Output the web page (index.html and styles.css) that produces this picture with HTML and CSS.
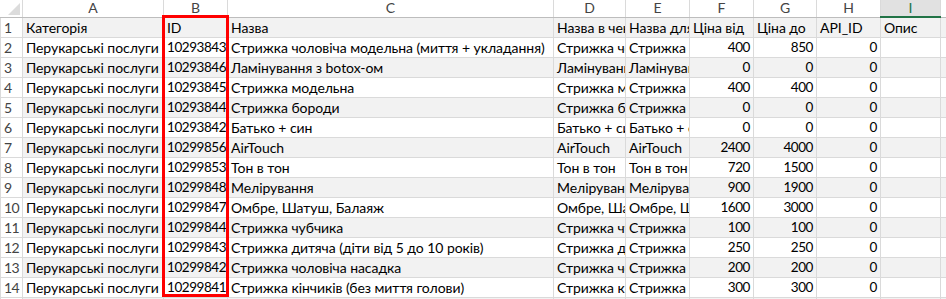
FILE: index.html
```html
<!DOCTYPE html>
<html lang="uk">
<head>
<meta charset="utf-8">
<link rel="stylesheet" href="styles.css">
</head>
<body>
<div class="sheet">
<table class="grid">
<colgroup>
<col class="c-rn"><col class="c-a"><col class="c-b"><col class="c-c"><col class="c-d"><col class="c-e"><col class="c-f"><col class="c-g"><col class="c-h"><col class="c-i"><col class="c-j">
</colgroup>
<thead>
<tr class="colhead">
<th class="corner"><span class="tri"></span></th>
<th>A</th><th>B</th><th>C</th><th>D</th><th>E</th><th>F</th><th>G</th><th>H</th><th class="sel">I</th><th></th>
</tr>
</thead>
<tbody>
<tr class="odd"><th>1</th><td>Категорія</td><td>ID</td><td>Назва</td><td>Назва в чеку</td><td>Назва для сайту</td><td>Ціна від</td><td>Ціна до</td><td>API_ID</td><td>Опис</td><td></td></tr>
<tr><th>2</th><td>Перукарські послуги</td><td class="n">10293843</td><td>Стрижка чоловіча модельна (миття + укладання)</td><td>Стрижка чоловіча модельна</td><td>Стрижка чоловіча модельна</td><td class="n">400</td><td class="n">850</td><td class="n">0</td><td></td><td></td></tr>
<tr class="odd"><th>3</th><td>Перукарські послуги</td><td class="n">10293846</td><td>Ламінування з botox-ом</td><td>Ламінування з botox-ом</td><td>Ламінування з botox-ом</td><td class="n">0</td><td class="n">0</td><td class="n">0</td><td></td><td></td></tr>
<tr><th>4</th><td>Перукарські послуги</td><td class="n">10293845</td><td>Стрижка модельна</td><td>Стрижка модельна</td><td>Стрижка модельна</td><td class="n">400</td><td class="n">400</td><td class="n">0</td><td></td><td></td></tr>
<tr class="odd"><th>5</th><td>Перукарські послуги</td><td class="n">10293844</td><td>Стрижка бороди</td><td>Стрижка бороди</td><td>Стрижка бороди</td><td class="n">0</td><td class="n">0</td><td class="n">0</td><td></td><td></td></tr>
<tr><th>6</th><td>Перукарські послуги</td><td class="n">10293842</td><td>Батько + син</td><td>Батько + син</td><td>Батько + син</td><td class="n">0</td><td class="n">0</td><td class="n">0</td><td></td><td></td></tr>
<tr class="odd"><th>7</th><td>Перукарські послуги</td><td class="n">10299856</td><td>AirTouch</td><td>AirTouch</td><td>AirTouch</td><td class="n">2400</td><td class="n">4000</td><td class="n">0</td><td></td><td></td></tr>
<tr><th>8</th><td>Перукарські послуги</td><td class="n">10299853</td><td>Тон в тон</td><td>Тон в тон</td><td>Тон в тон</td><td class="n">720</td><td class="n">1500</td><td class="n">0</td><td></td><td></td></tr>
<tr class="odd"><th>9</th><td>Перукарські послуги</td><td class="n">10299848</td><td>Мелірування</td><td>Мелірування</td><td>Мелірування</td><td class="n">900</td><td class="n">1900</td><td class="n">0</td><td></td><td></td></tr>
<tr><th>10</th><td>Перукарські послуги</td><td class="n">10299847</td><td>Омбре, Шатуш, Балаяж</td><td>Омбре, Шатуш, Балаяж</td><td>Омбре, Шатуш, Балаяж</td><td class="n">1600</td><td class="n">3000</td><td class="n">0</td><td></td><td></td></tr>
<tr class="odd"><th>11</th><td>Перукарські послуги</td><td class="n">10299844</td><td>Стрижка чубчика</td><td>Стрижка чубчика</td><td>Стрижка чубчика</td><td class="n">100</td><td class="n">100</td><td class="n">0</td><td></td><td></td></tr>
<tr><th>12</th><td>Перукарські послуги</td><td class="n">10299843</td><td>Стрижка дитяча (діти від 5 до 10 років)</td><td>Стрижка дитяча</td><td>Стрижка дитяча</td><td class="n">250</td><td class="n">250</td><td class="n">0</td><td></td><td></td></tr>
<tr class="odd"><th>13</th><td>Перукарські послуги</td><td class="n">10299842</td><td>Стрижка чоловіча насадка</td><td>Стрижка чоловіча насадка</td><td>Стрижка чоловіча насадка</td><td class="n">200</td><td class="n">200</td><td class="n">0</td><td></td><td></td></tr>
<tr><th>14</th><td>Перукарські послуги</td><td class="n">10299841</td><td>Стрижка кінчиків (без миття голови)</td><td>Стрижка кінчиків</td><td>Стрижка кінчиків</td><td class="n">300</td><td class="n">300</td><td class="n">0</td><td></td><td></td></tr>
<tr class="odd"><th>15</th><td></td><td></td><td></td><td></td><td></td><td></td><td></td><td></td><td></td><td></td></tr>
</tbody>
</table>
<div class="highlight"></div>
</div>
</body>
</html>
```
FILE: styles.css
```css
html, body {
  margin: 0;
  padding: 0;
  background: #ffffff;
  overflow: hidden;
}
.sheet {
  position: relative;
  width: 946px;
  height: 299px;
  overflow: hidden;
  font-family: Lato, "Noto Sans", sans-serif;
  font-size: 14px;
  letter-spacing: -0.05px;
  color: #000;
}
.grid {
  border-collapse: collapse;
  table-layout: fixed;
  width: 970px;
}
.c-rn { width: 22px; }
.c-a { width: 141px; }
.c-b { width: 64px; }
.c-c { width: 326px; }
.c-d { width: 72px; }
.c-e { width: 64px; }
.c-f { width: 64px; }
.c-g { width: 63px; }
.c-h { width: 64px; }
.c-i { width: 60px; }
.c-j { width: 30px; }

.grid td, .grid th {
  padding: 0 2px 0 3px;
  height: 19px;
  line-height: 19px;
  white-space: nowrap;
  overflow: hidden;
  text-overflow: clip;
  border: 1px solid #dadada;
  text-align: left;
  font-weight: normal;
}
.grid td.n {
  text-align: right;
  padding-right: 3px;
  font-size: 13.5px;
  letter-spacing: -0.45px;
}
.colhead th {
  height: 16px;
  line-height: 16px;
  background: #ffffff;
  color: #444;
  text-align: center;
  border-top: none;
  border-bottom: 1px solid #bdbdbd;
  border-left: 1px solid #dadada;
  border-right: 1px solid #dadada;
  padding: 0;
}
.colhead th.sel {
  background: #e1e1e1;
  color: #217346;
  border-bottom: 2px solid #217346;
}
.colhead th.corner {
  position: relative;
  border-left: none;
}
.tri {
  position: absolute;
  right: 2px;
  bottom: 2px;
  width: 0;
  height: 0;
  border-left: 12px solid transparent;
  border-bottom: 12px solid #dcdcdc;
}
tbody th {
  color: #444;
  text-align: center;
  padding: 0;
  background: #ffffff;
  border-left: none;
  border-right: 1px solid #bdbdbd;
  letter-spacing: -0.5px;
}
tbody tr.odd td {
  background: #f2f2f2;
}
.highlight {
  position: absolute;
  left: 162px;
  top: 15px;
  width: 61px;
  height: 276px;
  border: 3px solid #ff0000;
}
```
